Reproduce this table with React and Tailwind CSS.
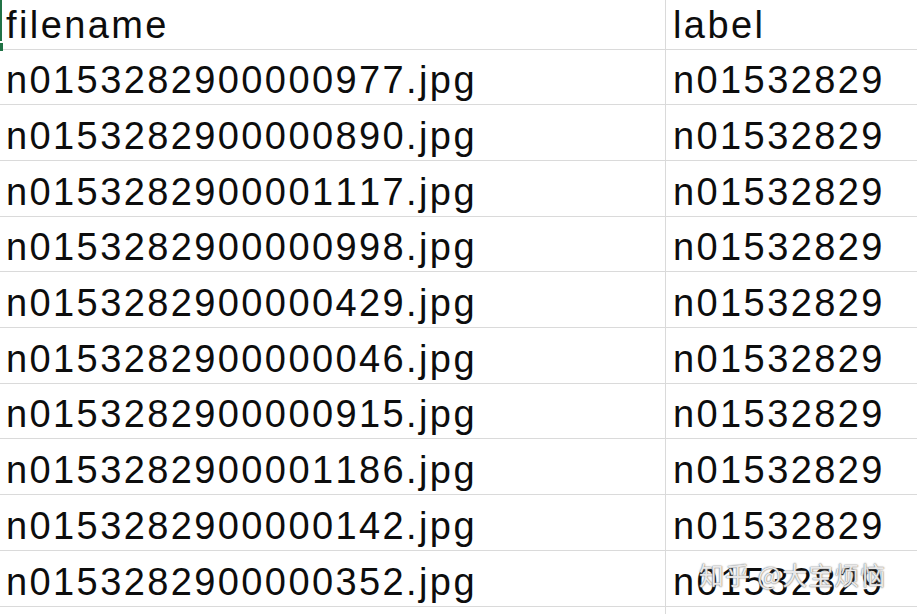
const rows = [
  "n0153282900000977.jpg",
  "n0153282900000890.jpg",
  "n0153282900001117.jpg",
  "n0153282900000998.jpg",
  "n0153282900000429.jpg",
  "n0153282900000046.jpg",
  "n0153282900000915.jpg",
  "n0153282900001186.jpg",
  "n0153282900000142.jpg",
  "n0153282900000352.jpg",
];

// row heights incl. bottom border, so lines land on 104, 160 ... 606
const tall = [false, true, true, false, true, true, false, true, true, true];

const Cell = ({ children, first }) => (
  <div
    className={
      first
        ? "flex w-[666px] shrink-0 items-end border-r border-[#dadada] pb-[2px] pl-[6px]"
        : "flex flex-1 items-end pb-[2px] pl-[7px]"
    }
  >
    <span className="leading-[44px]">{children}</span>
  </div>
);

const App = () => {
  return (
    <div
      className="relative h-[614px] w-[917px] overflow-hidden bg-white text-[38px] tracking-[2.4px] text-[#0d0d0d] [font-kerning:none]"
      style={{ fontFamily: "'Liberation Sans', Arial, sans-serif" }}
    >
      <div className="flex h-[50px] border-b border-[#dadada]">
        <Cell first>filename</Cell>
        <Cell>label</Cell>
      </div>

      {rows.map((name, i) => (
        <div
          key={name}
          className={`flex border-b border-[#dadada] ${tall[i] ? "h-[56px]" : "h-[55px]"}`}
        >
          <Cell first>{name}</Cell>
          <Cell>n01532829</Cell>
        </div>
      ))}

      <div className="flex h-[20px]">
        <div className="w-[666px] border-r border-[#dadada]"></div>
      </div>

      {/* selected cell marker */}
      <div className="absolute left-0 top-0 h-[41px] w-[2px] bg-[#217346]"></div>
      <div className="absolute left-0 top-[43px] h-[8px] w-[3px] bg-[#217346]"></div>

      {/* watermark */}
      <div
        className="absolute left-[699px] top-[562px] text-[25px] leading-none tracking-[1px] text-white/85 [text-shadow:0_0_1px_#666,0_0_2px_#999]"
        style={{ fontFamily: "'Noto Sans CJK SC', sans-serif" }}
      >
        知乎 @大宝烦恼
      </div>
    </div>
  );
};

export default App;
